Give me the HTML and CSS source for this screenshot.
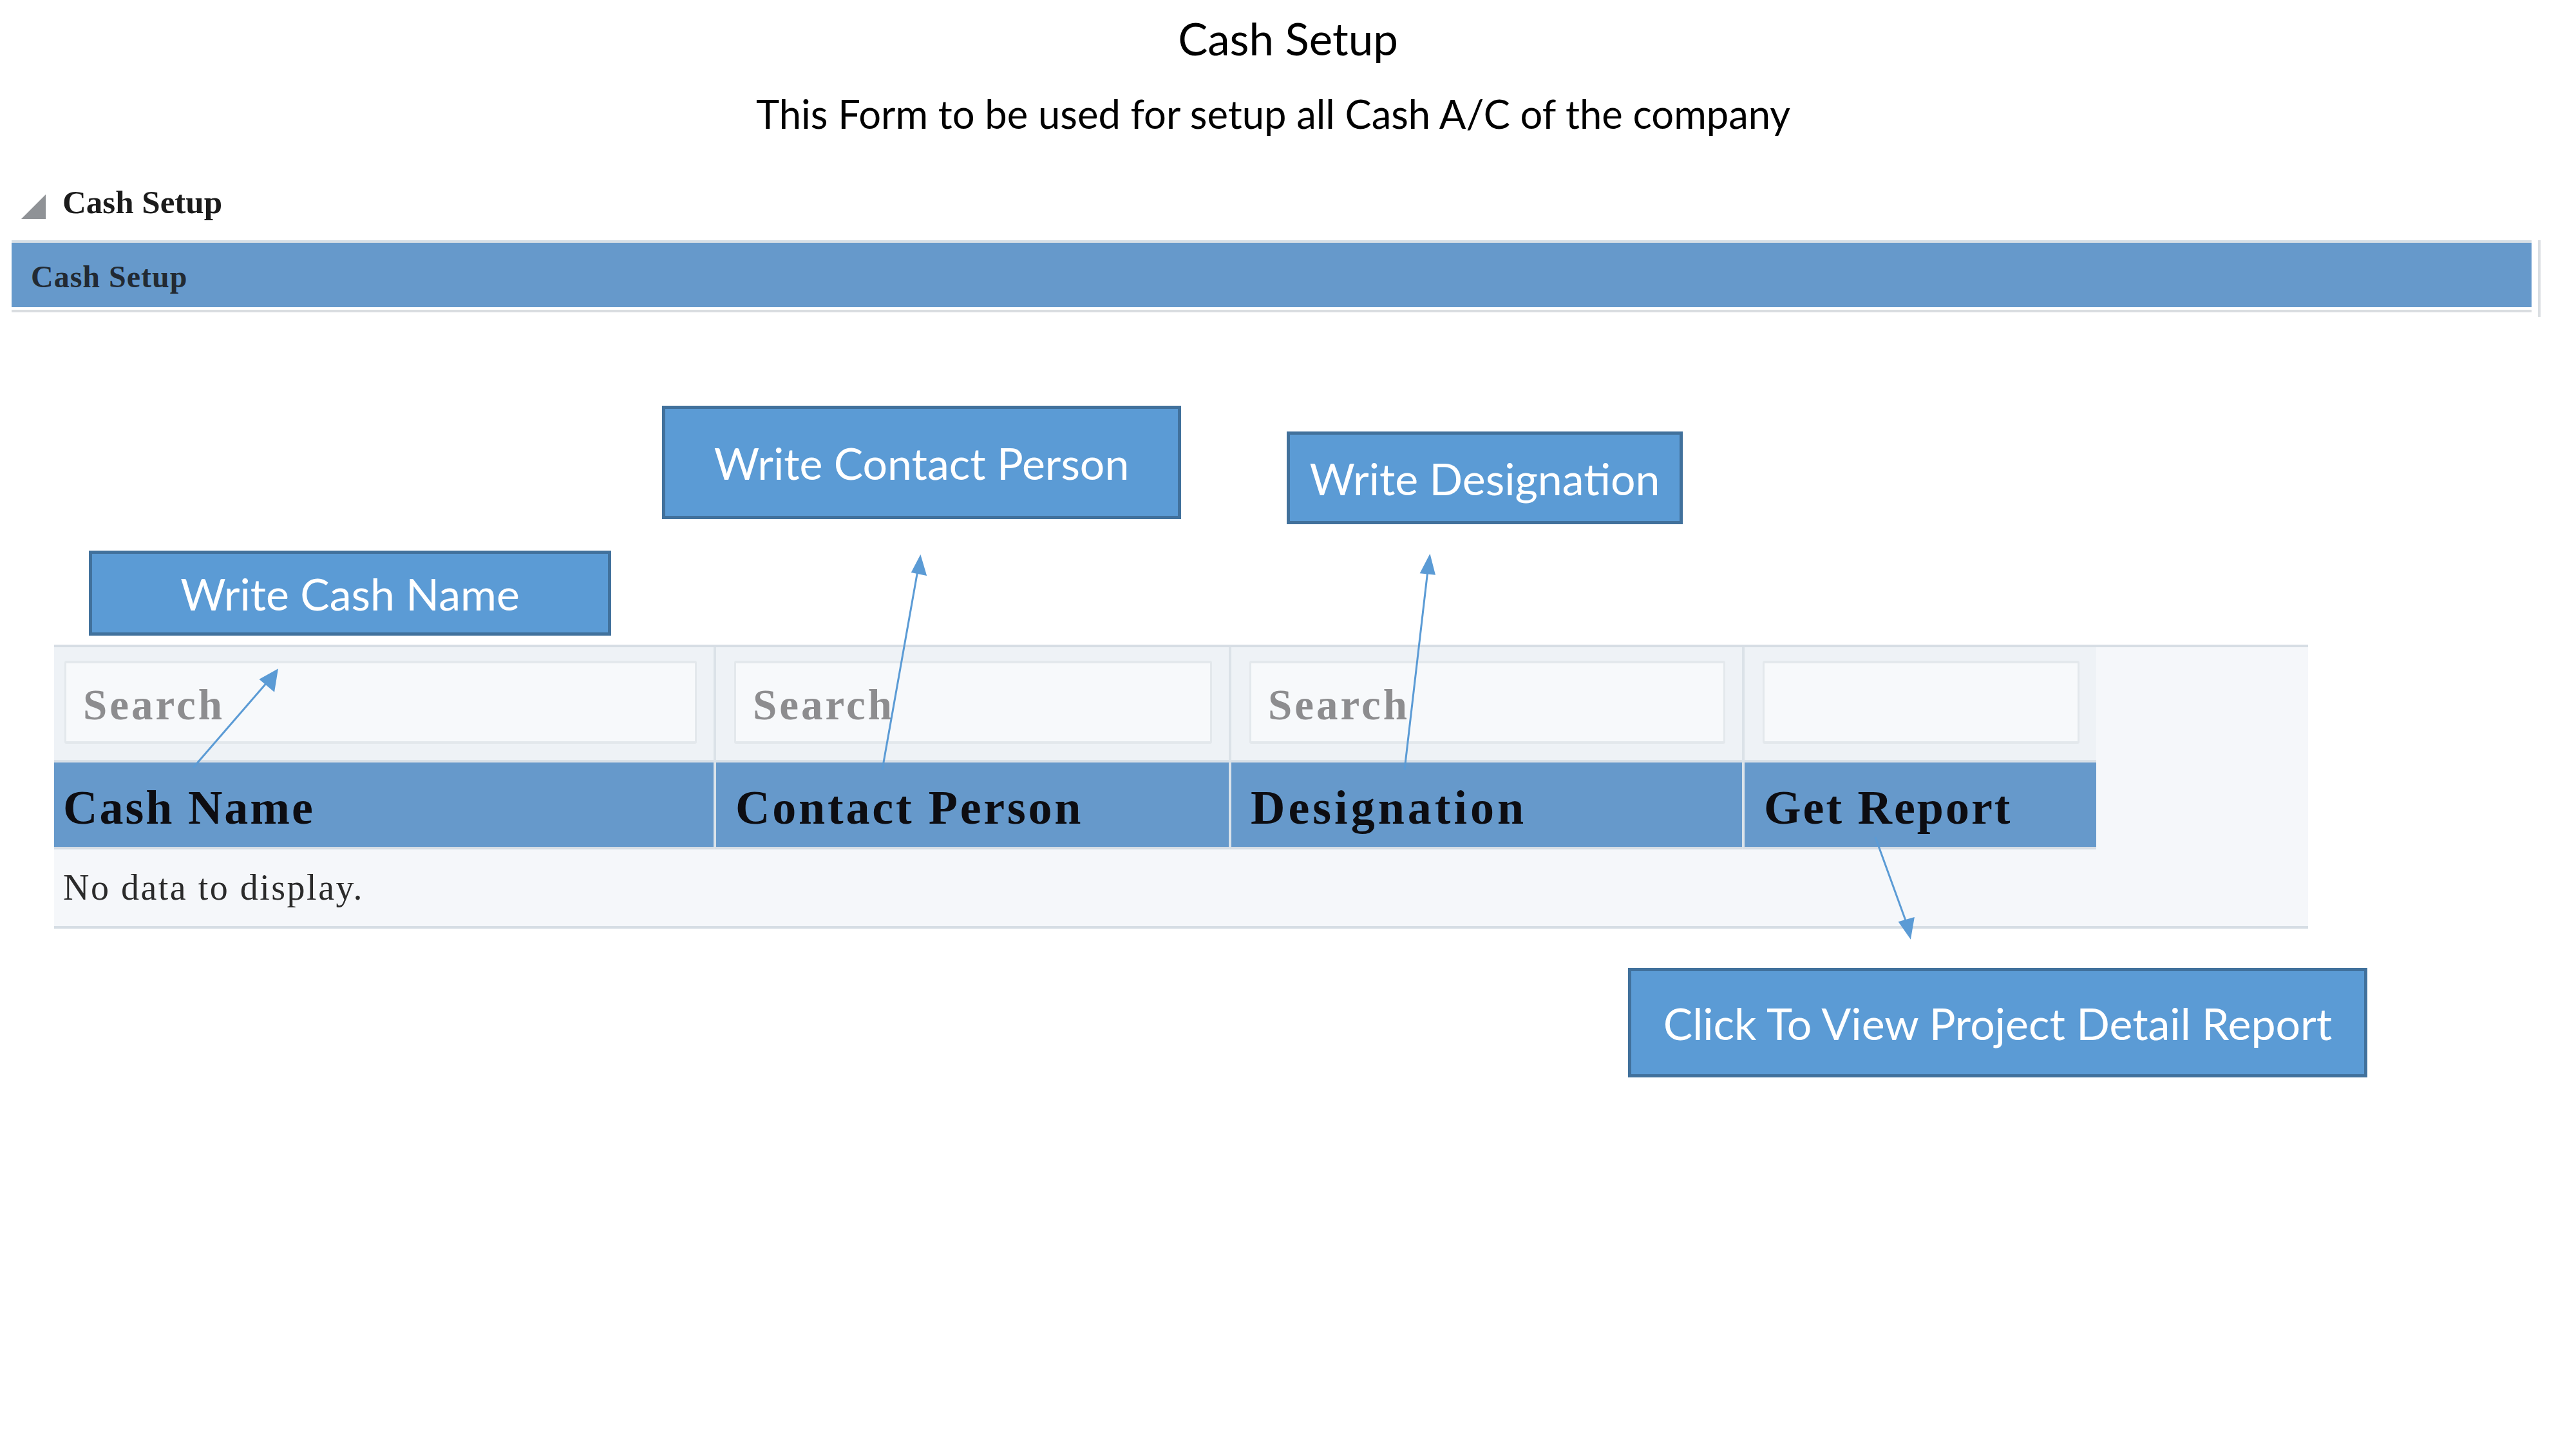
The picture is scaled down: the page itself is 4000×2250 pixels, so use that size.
FILE: index.html
```html
<!DOCTYPE html>
<html lang="en">
<head>
<meta charset="utf-8">
<title>Cash Setup</title>
<link rel="stylesheet" href="styles.css">
</head>
<body>
<header class="page-head">
  <h1 class="title">Cash Setup</h1>
  <p class="subtitle">This Form to be used for setup all Cash A/C of the company</p>
</header>

<section class="panel">
  <div class="disclosure">
    <span class="tri"></span>
    <span class="disc-label">Cash Setup</span>
  </div>
  <div class="bar-wrap">
    <div class="bar"><span class="bar-label">Cash Setup</span></div>
  </div>
</section>

<section class="grid-wrap">
  <div class="table">
    <div class="row filters">
      <div class="cell c1"><div class="input">Search</div></div>
      <div class="cell c2"><div class="input">Search</div></div>
      <div class="cell c3"><div class="input">Search</div></div>
      <div class="cell c4"><div class="input"></div></div>
      <div class="fill"></div>
    </div>
    <div class="row heads">
      <div class="hcell c1">Cash Name</div>
      <div class="hcell c2">Contact Person</div>
      <div class="hcell c3">Designation</div>
      <div class="hcell c4">Get Report</div>
      <div class="fill"></div>
    </div>
    <div class="tbody">No data to display.</div>
  </div>
</section>

<div class="callout co-cash">Write Cash Name</div>
<div class="callout co-contact">Write Contact Person</div>
<div class="callout co-desig">Write Designation</div>
<div class="callout co-report">Click To View Project Detail Report</div>

<svg class="arrows" width="4000" height="2250" viewBox="0 0 4000 2250" aria-hidden="true">
  <g stroke="#5b9bd5" stroke-width="3" fill="#5b9bd5">
    <line x1="300" y1="1192" x2="416" y2="1058"/>
    <polygon points="430,1041 425,1072 405,1055"/>
    <line x1="1370" y1="1195" x2="1425" y2="886"/>
    <polygon points="1429,865 1437,892 1417,888"/>
    <line x1="2181" y1="1195" x2="2217" y2="886"/>
    <polygon points="2220,864 2227,891 2207,889"/>
    <line x1="2912" y1="1300" x2="2960" y2="1432"/>
    <polygon points="2966,1455 2950,1432 2971,1426"/>
  </g>
</svg>
</body>
</html>
```

FILE: styles.css
```css
* { box-sizing: border-box; }

html, body {
  margin: 0;
  padding: 0;
  background: #ffffff;
}

body {
  position: relative;
  width: 4000px;
  height: 2250px;
  overflow: hidden;
  font-family: "Lato", "Open Sans", sans-serif;
  color: #000;
}

/* ---------- page heading ---------- */
.page-head {
  display: flex;
  flex-direction: column;
  align-items: center;
  padding-top: 18px;
}

.title {
  margin: 0;
  font-family: "Lato", sans-serif;
  font-weight: 400;
  font-size: 69px;
  line-height: 84px;
  color: #000;
}

.subtitle {
  margin: 38px 46px 0 0;
  font-family: "Lato", sans-serif;
  font-size: 61.5px;
  line-height: 72px;
  color: #000;
}

/* ---------- panel header ---------- */
.panel {
  margin-top: 79px;
}

.disclosure {
  display: flex;
  align-items: flex-end;
  gap: 26px;
  height: 50px;
  padding-left: 33px;
}

.tri {
  width: 0;
  height: 0;
  border-style: solid;
  border-width: 0 0 38px 38px;
  border-color: transparent transparent #8f9296 transparent;
  margin-bottom: 1px;
}

.disc-label {
  font-family: "Liberation Serif", "Times New Roman", serif;
  font-weight: 700;
  font-size: 51px;
  line-height: 50px;
  color: #1b1b1b;
  transform: translateY(-2px);
}

.bar-wrap {
  margin-top: 32px;
  margin-left: 18px;
  width: 3927px;
  padding-right: 10px;
  border-right: 4px solid #dadee2;
  padding-bottom: 11px;
}

.bar {
  height: 108px;
  border-top: 4px solid #d7dfe6;
  border-bottom: 4px solid #ffffff;
  box-shadow: 0 4px 0 #dadde0;
  background: #6699cb;
  display: flex;
  align-items: center;
  padding-left: 30px;
  position: relative;
}

.bar-label {
  font-family: "Liberation Serif", "Times New Roman", serif;
  font-weight: 700;
  font-size: 48px;
  letter-spacing: 1px;
  color: #222a33;
  transform: translateY(2px);
}

/* ---------- table ---------- */
.grid-wrap {
  margin-top: 509px;
  padding-left: 84px;
}

.table {
  width: 3500px;
  border-top: 4px solid #d6dde4;
  border-bottom: 4px solid #d6dde4;
  background: #f5f7fa;
}

.row {
  display: grid;
  grid-template-columns: 1024px 800px 797px 550px 1fr;
}

.filters .cell {
  height: 179px;
  background: #eef2f6;
  border-bottom: 4px solid #d9e0e7;
  padding: 21px 26px 25px 28px;
}

.filters .cell + .cell { border-left: 4px solid #dbe2e8; }
.filters .c1 { padding-left: 16px; }
.filters .c4 { padding-right: 26px; }

.input {
  height: 129px;
  background: #f7f9fb;
  border: 4px solid #e3e8ec;
  border-left-width: 3px;
  border-right-width: 3px;
  border-radius: 3px;
  display: flex;
  align-items: center;
  padding: 8px 0 0 26px;
  font-family: "Liberation Serif", "Times New Roman", serif;
  font-weight: 700;
  font-size: 67px;
  letter-spacing: 4px;
  color: #8d8d8f;
}

.heads .hcell {
  height: 135px;
  background: #6699cb;
  border-bottom: 4px solid #d6dde4;
  display: flex;
  align-items: center;
  padding: 10px 0 0 30px;
  font-family: "Liberation Serif", "Times New Roman", serif;
  font-weight: 700;
  font-size: 74px;
  letter-spacing: 3px;
  color: #0d0d12;
}

.heads .hcell + .hcell { border-left: 4px solid #dbe3ea; }
.heads .c1 { padding-left: 14px; }
.heads .c2 { letter-spacing: 3.8px; }
.heads .c3 { letter-spacing: 5px; }

.fill { background: #f5f7fa; }

.tbody {
  height: 119px;
  padding: 29px 0 0 14px;
  font-family: "Liberation Serif", "Times New Roman", serif;
  font-size: 56px;
  line-height: 60px;
  letter-spacing: 2.5px;
  color: #2b2b2b;
}

/* ---------- callouts (annotation layer) ---------- */
.callout {
  position: absolute;
  display: flex;
  align-items: center;
  justify-content: center;
  background: #5b9bd5;
  border: 5px solid #41719c;
  color: #ffffff;
  font-family: "Lato", "Open Sans", sans-serif;
  font-size: 68px;
  white-space: nowrap;
}

.co-cash    { left: 138px;  top: 855px;  width: 811px;  height: 132px; }
.co-contact { left: 1028px; top: 630px;  width: 806px;  height: 176px; }
.co-desig   { left: 1998px; top: 670px;  width: 615px;  height: 144px; }
.co-report  { left: 2528px; top: 1503px; width: 1148px; height: 170px; }

.arrows {
  position: absolute;
  left: 0;
  top: 0;
  pointer-events: none;
}
```
